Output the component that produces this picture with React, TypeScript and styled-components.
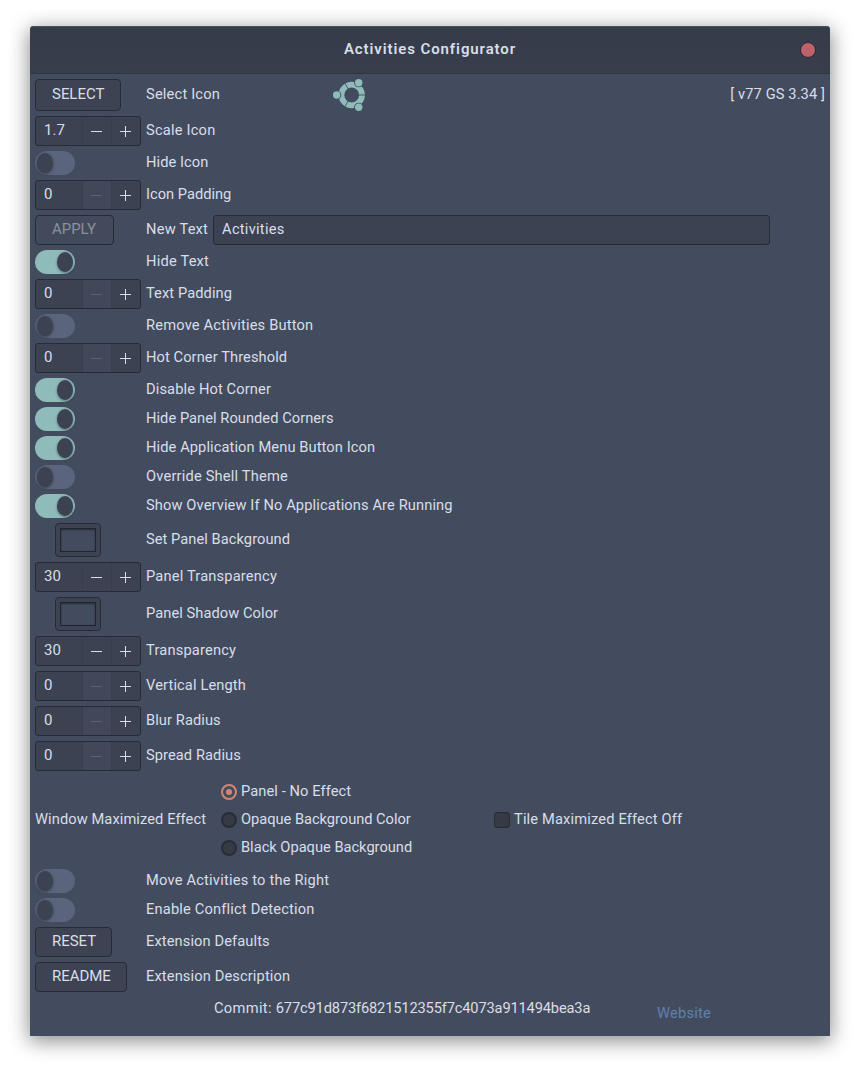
import React from "react";
import styled, { createGlobalStyle, css } from "styled-components";

const Global = createGlobalStyle`
  * { box-sizing: border-box; }
  body { margin: 0; background: #fff; font-family: Roboto, sans-serif; }
`;

const Page = styled.div`
  width: 860px;
  height: 1070px;
  padding: 26px 30px 34px;
  overflow: hidden;
`;

const Window = styled.main`
  height: 1010px;
  background: #434c5e;
  color: #d8dee9;
  font-size: 14.67px;
  border-radius: 4px 4px 0 0;
  box-shadow: 0 4px 20px 1px rgba(0, 0, 0, 0.46);
`;

const TitleBar = styled.header`
  height: 48px;
  display: flex;
  align-items: center;
  justify-content: space-between;
  padding: 0 14px;
  border-radius: 4px 4px 0 0;
  background: linear-gradient(#353b48, #383e4c);
  border-bottom: 1px solid #2f3541;
  box-shadow: inset 0 1px #4a515f;
`;

const TitleSide = styled.span`
  width: 16px;
`;

const Title = styled.h1`
  margin: 0;
  padding-bottom: 2px;
  font-size: 15px;
  line-height: 20px;
  font-weight: 600;
  letter-spacing: 0.9px;
`;

const Close = styled.button`
  width: 16px;
  height: 16px;
  padding: 0;
  border-radius: 50%;
  border: 1px solid #272c36;
  background: #bf616a;
`;

const Body = styled.div`
  display: flex;
  flex-direction: column;
  gap: 5px;
  padding: 5px;
`;

const Row = styled.div`
  display: flex;
  align-items: center;
`;

const Control = styled.div`
  flex: none;
  display: flex;
  width: 111px;
`;

const Text = styled.span<{ $track?: number }>`
  line-height: 20px;
  padding-bottom: 2px;
  white-space: pre;
  letter-spacing: ${(p) => p.$track ?? 0.12}px;
`;

const Button = styled.button<{ $w: number; $h?: number }>`
  width: ${(p) => p.$w}px;
  height: ${(p) => p.$h ?? 30}px;
  padding: 0 0 2px 16px;
  text-align: left;
  font: inherit;
  font-size: 15px;
  letter-spacing: -0.03px;
  color: #d8dee9;
  background: #3d4353;
  border: 1px solid #262b35;
  border-radius: 4px;
  &:disabled {
    color: #8a909e;
    background: #434a5b;
  }
`;

const Spin = styled.div`
  display: flex;
  width: 106px;
  height: 30px;
  border: 1px solid #262b35;
  border-radius: 3px;
  background: #3c4251;
  overflow: hidden;
`;

const SpinValue = styled.span`
  flex: none;
  width: 46px;
  padding-left: 8px;
  font-size: 15px;
  line-height: 26px;
`;

const Step = styled.span<{ $off?: boolean }>`
  flex: none;
  display: flex;
  width: 29px;
  height: 28px;
  border-left: 1px solid #383e4c;
  color: ${(p) => (p.$off ? "#5b6273" : "#d8dee9")};
  background: ${(p) => (p.$off ? "#424859" : "transparent")};
`;

const Toggle = styled.span<{ $on?: boolean }>`
  display: flex;
  width: 40px;
  height: 24px;
  padding: 2px;
  border-radius: 12px;
  background: #5a647c;
  ${(p) =>
    p.$on &&
    css`
      justify-content: flex-end;
      background: #8fbcbb;
    `}
`;

const Knob = styled.span`
  width: 16px;
  height: 20px;
  border-radius: 50%;
  background: #3c4252;
  box-shadow: 0 1px 3px rgba(0, 0, 0, 0.4);
`;

const ColorButton = styled.span`
  width: 46px;
  height: 34px;
  margin-left: 20px;
  padding: 4px;
  border: 1px solid #262b35;
  border-radius: 4px;
  background: #3d4353;
`;

const Swatch = styled.span`
  display: block;
  height: 24px;
  border: 1px solid #20242c;
  background: #434c5e;
  box-shadow: inset 0 1px 2px rgba(0, 0, 0, 0.4);
`;

const Logo = styled.svg`
  margin-left: 113px;
`;

const Push = styled.div`
  margin-left: auto;
  display: flex;
`;

const Entry = styled.div`
  width: 557px;
  height: 30px;
  margin-left: 5px;
  padding-left: 8px;
  line-height: 26px;
  letter-spacing: 0.25px;
  border: 1px solid #262b35;
  border-radius: 3px;
  background: #3c4251;
`;

const EffectRow = styled.div`
  display: grid;
  grid-template-columns: 186px 273px 1fr;
  align-items: center;
  height: 88px;
`;

const Options = styled.div`
  display: flex;
  flex-direction: column;
  gap: 6px;
`;

const Choice = styled.label`
  display: flex;
  align-items: center;
  gap: 4px;
  height: 22px;
`;

const Radio = styled.span<{ $on?: boolean }>`
  display: grid;
  place-items: center;
  width: 16px;
  height: 16px;
  border-radius: 50%;
  border: 2px solid ${(p) => (p.$on ? "#d08770" : "#272c35")};
  background: ${(p) => (p.$on ? "transparent" : "#363a45")};
  &::after {
    content: "";
    width: 6px;
    height: 6px;
    border-radius: 50%;
    background: ${(p) => (p.$on ? "#d08770" : "transparent")};
  }
`;

const Check = styled.span`
  width: 16px;
  height: 16px;
  border: 1px solid #272c35;
  border-radius: 3px;
  background: #363a45;
`;

const Footer = styled.footer`
  display: flex;
  height: 34px;
  padding-left: 179px;
`;

const Commit = styled.span`
  width: 443px;
  line-height: 22px;
  letter-spacing: 0.33px;
`;

const Hash = styled.span`
  letter-spacing: -0.16px;
`;

const Website = styled.a`
  color: #5e81ac;
  line-height: 32px;
  letter-spacing: 0.22px;
`;

function UbuntuLogo() {
  const dots = [
    [3.7, 16],
    [25.7, 3.7],
    [25.7, 28.3],
  ];
  return (
    <Logo width="33" height="32" viewBox="0 0 33 32">
      <mask id="ring">
        <circle cx="18.7" cy="16" r="10.3" fill="none" stroke="#fff" strokeWidth="5.8" />
        {dots.map(([x, y]) => (
          <circle key={`${x}-${y}`} cx={x} cy={y} r="4.6" fill="#000" />
        ))}
        <path d="M18.7 16H33M18.7 16L11.2 3M18.7 16L11.2 29" stroke="#000" strokeWidth="0.9" />
      </mask>
      <rect width="33" height="32" fill="#8fbcbb" mask="url(#ring)" />
      {dots.map(([x, y]) => (
        <circle key={`${x}-${y}`} cx={x} cy={y} r="3.7" fill="#8fbcbb" />
      ))}
    </Logo>
  );
}

function SpinBox({ value }: { value: string }) {
  return (
    <Spin>
      <SpinValue>{value}</SpinValue>
      <Step $off={value === "0"}>
        <svg width="28" height="28">
          <path d="M8 14.5H19" stroke="currentColor" />
        </svg>
      </Step>
      <Step>
        <svg width="28" height="28">
          <path d="M8 14.5H19M13.5 9V20" stroke="currentColor" />
        </svg>
      </Step>
    </Spin>
  );
}

type Item = { label: string; track?: number; spin?: string; on?: boolean; color?: boolean };

function Setting({ label, track, spin, on, color }: Item) {
  return (
    <Row>
      <Control>
        {spin !== undefined && <SpinBox value={spin} />}
        {on !== undefined && (
          <Toggle $on={on}>
            <Knob />
          </Toggle>
        )}
        {color && (
          <ColorButton>
            <Swatch />
          </ColorButton>
        )}
      </Control>
      <Text $track={track}>{label}</Text>
    </Row>
  );
}

const iconItems: Item[] = [
  { label: "Scale Icon", track: 0.2, spin: "1.7" },
  { label: "Hide Icon", track: 0.06, on: false },
  { label: "Icon Padding", track: 0, spin: "0" },
];

const panelItems: Item[] = [
  { label: "Hide Text", track: 0.2, on: true },
  { label: "Text Padding", track: 0.08, spin: "0" },
  { label: "Remove Activities Button", track: 0.18, on: false },
  { label: "Hot Corner Threshold", track: 0.08, spin: "0" },
  { label: "Disable Hot Corner", on: true },
  { label: "Hide Panel Rounded Corners", track: 0.04, on: true },
  { label: "Hide Application Menu Button Icon", track: 0.09, on: true },
  { label: "Override Shell Theme", track: 0.18, on: false },
  { label: "Show Overview If No Applications Are Running", track: 0.11, on: true },
  { label: "Set Panel Background", track: 0.05, color: true },
  { label: "Panel Transparency", track: 0.17, spin: "30" },
  { label: "Panel Shadow Color", track: 0.06, color: true },
  { label: "Transparency", track: 0.18, spin: "30" },
  { label: "Vertical Length", spin: "0" },
  { label: "Blur Radius", track: 0.08, spin: "0" },
  { label: "Spread Radius", track: 0.07, spin: "0" },
];

const extraItems: Item[] = [
  { label: "Move Activities to the Right", track: 0.2, on: false },
  { label: "Enable Conflict Detection", track: 0.17, on: false },
];

const renderItems = (items: Item[]) => items.map((item) => <Setting key={item.label} {...item} />);

export default function App() {
  return (
    <Page>
      <Global />
      <Window>
        <TitleBar>
          <TitleSide />
          <Title>Activities Configurator</Title>
          <Close aria-label="Close" />
        </TitleBar>
        <Body>
          <Row>
            <Control>
              <Button $w={86} $h={32}>SELECT</Button>
            </Control>
            <Text $track={0.18}>Select Icon</Text>
            <UbuntuLogo />
            <Push>
              <Text $track={0.1}>[ v77 GS 3.34 ]</Text>
            </Push>
          </Row>
          {renderItems(iconItems)}
          <Row>
            <Control>
              <Button $w={79} disabled>APPLY</Button>
            </Control>
            <Text $track={0.2}>New Text</Text>
            <Entry>Activities</Entry>
          </Row>
          {renderItems(panelItems)}
          <EffectRow>
            <Text $track={0.08}>Window Maximized Effect</Text>
            <Options>
              <Choice>
                <Radio $on />
                <Text $track={0.08}>Panel - No Effect</Text>
              </Choice>
              <Choice>
                <Radio />
                <Text $track={-0.03}>Opaque Background Color</Text>
              </Choice>
              <Choice>
                <Radio />
                <Text $track={-0.01}>Black Opaque Background</Text>
              </Choice>
            </Options>
            <Choice>
              <Check />
              <Text $track={0.15}>Tile Maximized Effect Off</Text>
            </Choice>
          </EffectRow>
          {renderItems(extraItems)}
          <Row>
            <Control>
              <Button $w={77}>RESET</Button>
            </Control>
            <Text $track={0.1}>Extension Defaults</Text>
          </Row>
          <Row>
            <Control>
              <Button $w={92}>README</Button>
            </Control>
            <Text>Extension Description</Text>
          </Row>
          <Footer>
            <Commit>
              Commit: <Hash>677c91d873f6821512355f7c4073a911494bea3a</Hash>
            </Commit>
            <Website>Website</Website>
          </Footer>
        </Body>
      </Window>
    </Page>
  );
}
